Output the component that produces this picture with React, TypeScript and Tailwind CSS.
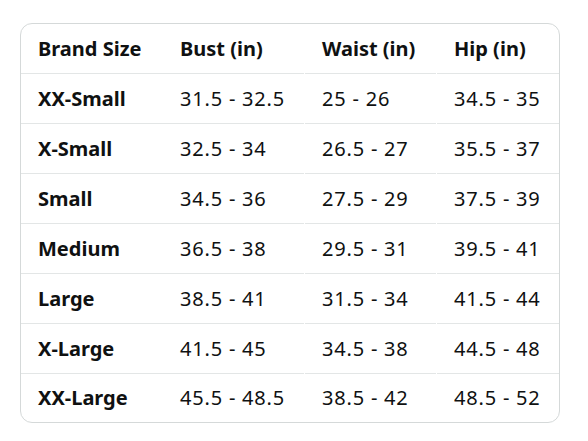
const headers = ["Brand Size", "Bust (in)", "Waist (in)", "Hip (in)"];

const rows: string[][] = [
  ["XX-Small", "31.5 - 32.5", "25 - 26", "34.5 - 35"],
  ["X-Small", "32.5 - 34", "26.5 - 27", "35.5 - 37"],
  ["Small", "34.5 - 36", "27.5 - 29", "37.5 - 39"],
  ["Medium", "36.5 - 38", "29.5 - 31", "39.5 - 41"],
  ["Large", "38.5 - 41", "31.5 - 34", "41.5 - 44"],
  ["X-Large", "41.5 - 45", "34.5 - 38", "44.5 - 48"],
  ["XX-Large", "45.5 - 48.5", "38.5 - 42", "48.5 - 52"],
];

const colClass = ["w-[142px]", "w-[141px]", "w-[131px] ml-px", "w-[122px] ml-px"];

const Row = ({
  cells,
  bold,
  last,
}: {
  cells: string[];
  bold?: boolean;
  last?: boolean;
}) => {
  return (
    <div className={`flex ${last ? "h-[48px]" : "h-[50px]"}`}>
      {cells.map((c, i) => (
        <div
          key={i}
          className={`${colClass[i]} flex items-center pl-[17px] whitespace-nowrap ${
            last ? "" : "border-b border-[#e3e6e6]"
          } ${bold || i === 0 ? "font-bold" : "font-normal tracking-[0.8px]"}`}
        >
          {c}
        </div>
      ))}
    </div>
  );
};

export default function App() {
  return (
    <div
      className="w-[588px] h-[441px] bg-white pt-[23px] pl-[20px] text-[#0f1111] text-[20px]"
      style={{ fontFamily: '"Noto Sans", sans-serif' }}
    >
      <div className="w-[540px] border border-[#d5d9d9] rounded-xl overflow-hidden">
        <Row cells={headers} bold />
        {rows.map((r, i) => (
          <Row key={r[0]} cells={r} last={i === rows.length - 1} />
        ))}
      </div>
    </div>
  );
}
